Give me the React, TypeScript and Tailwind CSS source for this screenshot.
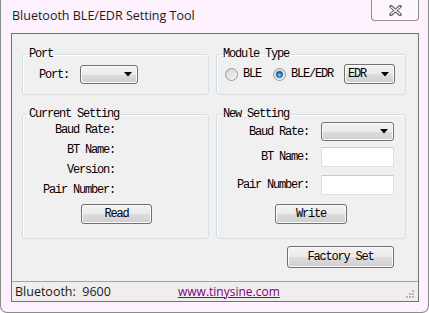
import React from 'react';

const mono = "font-['Liberation_Mono','Courier_New',monospace] text-[12px] tracking-[-1.2px] leading-[12px] text-black";
const ui = "font-['Open_Sans','Noto_Sans',sans-serif]";
const winGradient =
    'bg-[linear-gradient(to_bottom,#f2f2f2_0%,#ebebeb_50%,#dddddd_50%,#cfcfcf_100%)]';

// Little black drop arrow used in the combo boxes
const Arrow = () => (
    <svg width="8" height="5" viewBox="0 0 8 5" className="shrink-0">
        <path d="M0 0 H8 L4 4.5 Z" fill="#000" />
    </svg>
);

const Combo = ({ className, text }: { className: string; text?: string }) => (
    <div
        className={`flex items-center rounded-[3px] border border-[#707070] shadow-[inset_0_0_0_1px_#fbfbfb] ${winGradient} ${className}`}
    >
        <span className={`${mono} flex-1 pl-[3px]`}>{text}</span>
        <div className="pr-[5px]">
            <Arrow />
        </div>
    </div>
);

const Button = ({ className, label }: { className: string; label: string }) => (
    <button
        className={`flex items-center justify-center rounded-[3px] border border-[#707070] shadow-[inset_0_0_0_1px_#fbfbfb] ${winGradient} ${mono} ${className}`}
    >
        {label}
    </button>
);

const Radio = ({ checked }: { checked?: boolean }) => (
    <svg width="13" height="13" viewBox="0 0 13 13" className="shrink-0">
        <defs>
            <linearGradient id="rfill" x1="0" y1="0" x2="1" y2="1">
                <stop offset="0" stopColor="#cfcfcf" />
                <stop offset="1" stopColor="#fbfbfb" />
            </linearGradient>
            <radialGradient id="rdot" cx="0.5" cy="0.6" r="0.6">
                <stop offset="0" stopColor="#8fd6ff" />
                <stop offset="0.5" stopColor="#2a8be0" />
                <stop offset="1" stopColor="#0a3f8a" />
            </radialGradient>
        </defs>
        <circle cx="6.5" cy="6.5" r="6" fill="url(#rfill)" stroke="#9a9a9a" />
        {checked ? (
            <circle cx="6.5" cy="6.5" r="3.2" fill="url(#rdot)" stroke="#1b4f8f" strokeWidth="0.6" />
        ) : (
            <circle cx="6.5" cy="6.5" r="3.5" fill="#e6e6e6" opacity="0.6" />
        )}
    </svg>
);

const Group = ({ title, className, children }: { title: string; className: string; children: React.ReactNode }) => (
    <fieldset
        className={`rounded-[3px] border border-[#d5dfe5] shadow-[inset_1px_1px_0_#ffffff] ${className}`}
    >
        <legend className={`${mono} ml-[5px] px-[1px]`}>{title}</legend>
        {children}
    </fieldset>
);

const Input = () => <div className="h-[20px] w-[73px] border border-[#dbdfe6] border-t-[#c5c9d0] bg-white" />;

export default function App() {
    return (
        <div className="flex h-[313px] w-[429px] flex-col rounded-b-[7px] border-x border-b border-[#8b8b8b] bg-[#fcf1fc]">
            {/* Title bar */}
            <div className="flex h-[33px] items-start">
                <span className={`${ui} pl-[11px] pt-[8px] text-[12.5px] leading-[16px] text-[#1b1b1b]`}>
                    Bluetooth BLE/EDR Setting Tool
                </span>
                <div className="ml-auto mr-[9px] flex h-[21px] w-[48px] items-center justify-center rounded-b-[4px] border-x border-b border-[#8f8f8f] bg-[#fdf6fd] shadow-[inset_0_-1px_0_#ffffff]">
                    <svg width="13" height="11" viewBox="0 0 13 11">
                        <path d="M2 1.5 L11 9.5 M11 1.5 L2 9.5" stroke="#5a6273" strokeWidth="3.4" strokeLinecap="round" />
                        <path d="M2.3 1.9 L10.7 9.1 M10.7 1.9 L2.3 9.1" stroke="#f4f4f6" strokeWidth="1.3" strokeLinecap="round" />
                    </svg>
                </div>
            </div>

            {/* Client area */}
            <div className="ml-[10px] flex h-[269px] w-[408px] flex-col border border-[#737373] bg-[#f0f0f0]">
                <div className="grid grid-cols-[187px_190px] gap-x-[7px] pl-[10px] pt-[14px]">
                    <Group title="Port" className="h-[47px]">
                        <div className="mt-[5px] flex items-center pl-[16px]">
                            <span className={`${mono} w-[41px]`}>Port:</span>
                            <Combo className="h-[19px] w-[58px]" />
                        </div>
                    </Group>
                    <Group title="Module Type" className="h-[47px]">
                        <div className="mt-[4px] flex items-center pl-[8px]">
                            <Radio />
                            <span className={`${mono} ml-[5px]`}>BLE</span>
                            <div className="ml-[12px]">
                                <Radio checked />
                            </div>
                            <span className={`${mono} ml-[5px]`}>BLE/EDR</span>
                            <Combo className="ml-[11px] h-[20px] w-[51px]" text="EDR" />
                        </div>
                    </Group>

                    <Group title="Current Setting" className="mt-[13px] h-[131px]">
                        <div className="flex flex-col">
                            {['Baud Rate:', 'BT Name:', 'Version:', 'Pair Number:'].map((l) => (
                                <div key={l} className={`${mono} flex h-[20px] w-[92px] items-center justify-end`}>
                                    {l}
                                </div>
                            ))}
                            <Button className="ml-[58px] mt-[4px] h-[20px] w-[71px]" label="Read" />
                        </div>
                    </Group>
                    <Group title="New Setting" className="mt-[13px] h-[131px]">
                        <div className="flex flex-col">
                            <div className="mt-[2px] flex h-[19px] items-center gap-x-[12px]">
                                <span className={`${mono} w-[92px] text-right`}>Baud Rate:</span>
                                <Combo className="h-[19px] w-[73px]" />
                            </div>
                            <div className="mt-[6px] flex h-[20px] items-center gap-x-[12px]">
                                <span className={`${mono} w-[92px] text-right`}>BT Name:</span>
                                <Input />
                            </div>
                            <div className="mt-[8px] flex h-[20px] items-center gap-x-[12px]">
                                <span className={`${mono} w-[92px] text-right`}>Pair Number:</span>
                                <Input />
                            </div>
                            <Button className="ml-[58px] mt-[9px] h-[20px] w-[72px]" label="Write" />
                        </div>
                    </Group>
                </div>

                <Button className="ml-[275px] mt-[7px] h-[22px] w-[107px]" label="Factory Set" />

                {/* Status bar */}
                <div className="mt-auto flex h-[20px] items-center border-t border-[#a3a3a3] bg-[#f0eded]">
                    <span className={`${ui} w-[166px] pl-[3px] text-[12.5px] leading-[16px] text-[#1b1b1b]`}>
                        Bluetooth:&nbsp;&nbsp;9600
                    </span>
                    <a href="#" className={`${ui} text-[12px] leading-[16px] text-[#800080] underline`}>
                        www.tinysine.com
                    </a>
                    <svg width="10" height="10" viewBox="0 0 10 10" className="ml-auto mr-[3px] mt-[6px]">
                        {[
                            [7, 0],
                            [4, 3],
                            [7, 3],
                            [1, 6],
                            [4, 6],
                            [7, 6],
                        ].map(([x, y]) => (
                            <rect key={`${x}-${y}`} x={x} y={y} width="2" height="2" fill="#b3b3b3" />
                        ))}
                    </svg>
                </div>
            </div>
        </div>
    );
}
